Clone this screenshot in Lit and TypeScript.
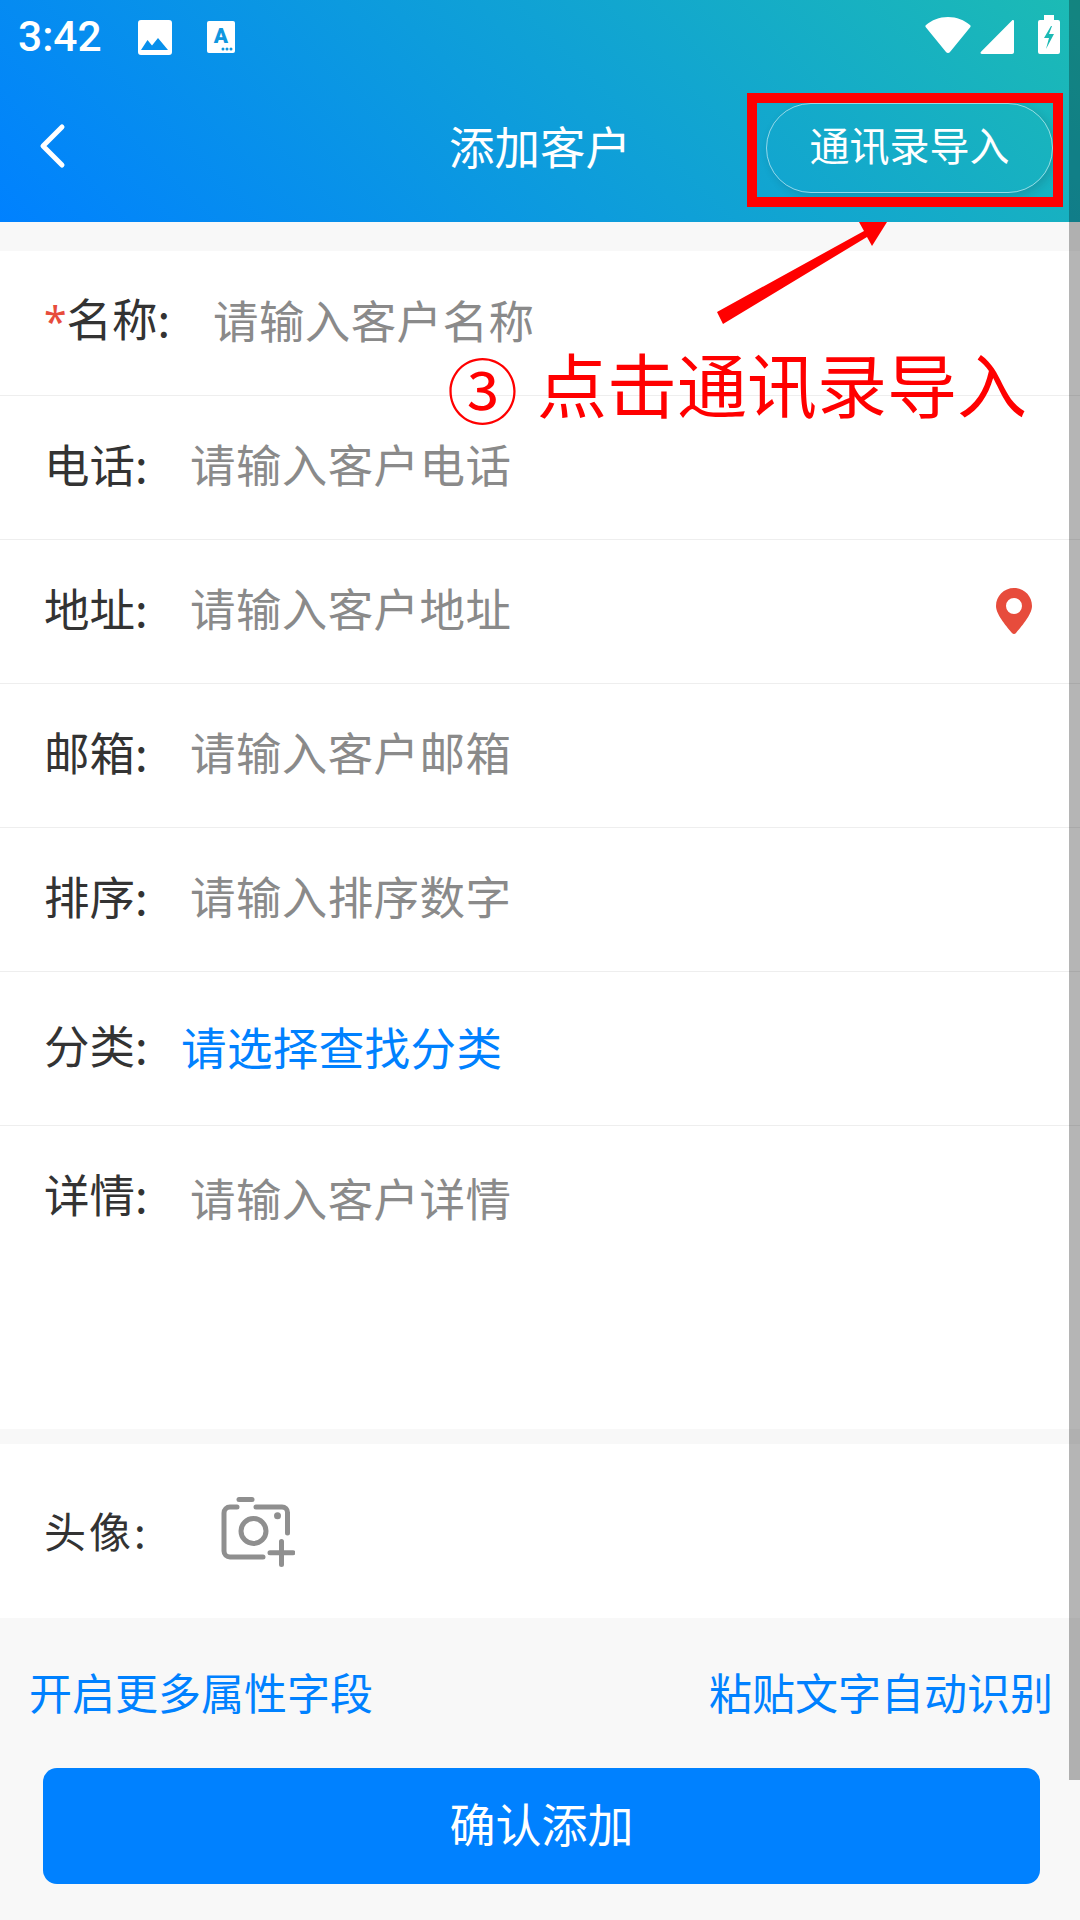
import { LitElement, html, css, svg } from "lit";
import { customElement } from "lit/decorators.js";

const pin = html`<svg class="pin" viewBox="0 0 36 46" width="36" height="46"><path fill="#e74c3c" fill-rule="evenodd" d="M18 0C8 0 0 8 0 18c0 9 12 22 16 27 1 1.300 3 1.300 4 0 4-5 16-18 16-27C36 8 28 0 18 0Zm0 10a8 8 0 1 1 0 16 8 8 0 0 1 0-16Z" /></svg>`;

const camera = html`<svg class="camera" width="74" height="70" viewBox="0 0 74 70" fill="none" stroke="#8f8f8f" stroke-width="5" stroke-linecap="round" stroke-linejoin="round">
  <path d="M18 2.500h13" />
  <path d="M16 10H9a6 6 0 0 0-6 6v38a6 6 0 0 0 6 6h33" />
  <path d="M35 10h26a5.500 5.500 0 0 1 5.500 5.500V36" />
  <circle cx="32.500" cy="34" r="12.500" />
  <circle cx="56.500" cy="18.700" r="3.500" fill="#8f8f8f" stroke="none" />
  <path d="M49 55.700h23M60.500 44.500v23" />
</svg>`;

const chevron = html`<svg class="back" width="32" height="48" viewBox="0 0 32 48" fill="none" stroke="#fff" stroke-width="5" stroke-linecap="round" stroke-linejoin="round"><path d="M23 5 4 24l19 19" /></svg>`;

interface Row { label: string; hint: string; kind?: string; }
const rows: Row[] = [
  { label: "名称:", hint: "请输入客户名称", kind: "req" },
  { label: "电话:", hint: "请输入客户电话" },
  { label: "地址:", hint: "请输入客户地址", kind: "addr" },
  { label: "邮箱:", hint: "请输入客户邮箱" },
  { label: "排序:", hint: "请输入排序数字" },
  { label: "分类:", hint: "请选择查找分类", kind: "pick" },
  { label: "详情:", hint: "请输入客户详情", kind: "area" },
];

@customElement("app-root")
export class AppRoot extends LitElement {
  static styles = css`
    :host {
      display: block;
      position: relative;
      width: 1080px;
      height: 1920px;
      overflow: hidden;
      background: #f8f8f8;
      font-family: "Noto Sans CJK SC", "Noto Sans", sans-serif;
    }
    .head {
      height: 222px;
      background: linear-gradient(45deg, #0081ff, #1cbbb4);
      color: #fff;
      display: flex;
      flex-direction: column;
    }
    .status {
      height: 74px;
      position: relative;
      display: flex;
      align-items: center;
      padding-left: 18px;
    }
    .time {
      font: 500 42.500px/74px Roboto, sans-serif;
      width: 120px;
    }
    .status svg { display: block; flex: none; }
    .spacer { flex: 1; }
    .nav {
      height: 148px;
      display: grid;
      grid-template-columns: 1fr auto 1fr;
      align-items: center;
    }
    .back { margin-left: 39px; margin-bottom: 4px; display: block; }
    .title { font-size: 45.500px; line-height: 60px; padding-bottom: 6px; }
    .pill {
      justify-self: end;
      margin-right: 27px;
      width: 287px;
      height: 90px;
      box-sizing: border-box;
      border: 1px solid rgba(255, 255, 255, 0.55);
      border-radius: 45px;
      box-shadow: 3px 3px 8px rgba(26, 26, 26, 0.15);
      display: flex;
      align-items: center;
      justify-content: center;
      font-size: 40px;
      padding-bottom: 8px;
    }
    .card { background: #fff; margin-top: 29px; }
    .row {
      height: 144px;
      box-sizing: border-box;
      padding-left: 45px;
      padding-right: 48px;
      display: flex;
      align-items: center;
      border-bottom: 1px solid #eee;
      font-size: 45.500px;
    }
    .label { color: #333; width: 146px; flex: none; white-space: nowrap; padding-bottom: 9px; margin-left: -1px; line-height: 54px; }
    .hint { color: #8a8a8a; flex: 1; white-space: nowrap; letter-spacing: 0.4px; padding-bottom: 9px; line-height: 54px; }
    .pin { margin-bottom: 2px; }
    .req { padding-left: 44px; height: 145px; }
    .req .label { width: 169px; margin-left: 0; }
    .star { color: #e74c3c; font-family: "Noto Sans", sans-serif; font-size: 41px; }
    .pick { height: 154px; }
    .pick .label { width: 137px; }
    .pick .hint { color: #0081ff; padding-bottom: 6px; }
    .area {
      height: 303px;
      align-items: flex-start;
      padding-top: 40px;
      border-bottom: none;
    }
    .area .hint { margin-top: 4px; }
    .avatar {
      background: #fff;
      margin-top: 15px;
      height: 174px;
      display: flex;
      align-items: center;
      padding-left: 44px;
    }
    .avatar .alabel {
      color: #333;
      font-size: 42px;
      width: 177px;
      letter-spacing: 3px;
      white-space: nowrap;
      padding-bottom: 4px;
    }
    .camera { display: block; margin-top: 2px; }
    .links {
      display: flex;
      justify-content: space-between;
      padding: 44px 27px 0 29px;
      font-size: 43px;
      line-height: 58px;
      color: #0081ff;
    }
    .submit {
      margin: 48px 40px 0 43px;
      height: 116px;
      border-radius: 14px;
      background: #0081ff;
      color: #fff;
      font-size: 46px;
      display: flex;
      align-items: center;
      justify-content: center;
      box-sizing: border-box;
      padding-bottom: 8px;
    }
    .scrollbar {
      position: absolute;
      left: 1069px;
      top: 0;
      width: 11px;
      height: 1780px;
      background: rgba(0, 0, 0, 0.29);
    }
    .mark {
      position: absolute;
      left: 747px;
      top: 93px;
      width: 316px;
      height: 114px;
      box-sizing: border-box;
      border: 10px solid #f00;
    }
    .arrow { position: absolute; left: 700px; top: 222px; display: block; }
    .note {
      position: absolute;
      left: 442px;
      top: 349px;
      color: #f00;
      font-size: 70px;
      line-height: 60px;
      white-space: nowrap;
      display: flex;
      align-items: center;
    }
    .circled { width: 90px; font-size: 71px; margin-left: 5px; margin-top: 8px; line-height: 60px; }
  `;

  private statusBar() {
    return html`<div class="status">
      <span class="time">3:42</span>
      <svg width="34" height="74" viewBox="0 0 34 74">
        <path fill="#fff" fill-rule="evenodd" d="M3 20h28a3 3 0 0 1 3 3v29a3 3 0 0 1-3 3H3a3 3 0 0 1-3-3V23a3 3 0 0 1 3-3Zm0 30h27l-10-12-6 7.500-4.500-5.500Z" />
      </svg>
      <svg style="margin-left:35px" width="28" height="74" viewBox="0 0 28 74">
        <rect y="21" width="28" height="32" rx="2" fill="#fff" />
        <text x="14" y="43" text-anchor="middle" font-family="Roboto, sans-serif" font-weight="900" font-size="21" fill="#0f97df">A</text>
        <g fill="#0f97df"><circle cx="16" cy="49" r="1.500" /><circle cx="20" cy="49" r="1.500" /><circle cx="24" cy="49" r="1.500" /></g>
      </svg>
      <span class="spacer"></span>
      <svg width="46" height="74" viewBox="0 0 46 74">
        <path fill="#fff" d="M1 25C7 20 14 17 23 17s16 3 22 8c.700.700.800 1.500.200 2.200L25 52a2.600 2.600 0 0 1-4 0L.800 27.200C.200 26.500.300 25.700 1 25Z" />
      </svg>
      <svg style="margin-left:9px" width="34" height="74" viewBox="0 0 34 74">
        <path fill="#fff" d="M32 20.500c1-.800 2-.300 2 1V52c0 1-.800 2-2 2H2c-1.500 0-2-1.300-1-2.300Z" />
      </svg>
      <svg style="margin-left:24px;margin-right:20px" width="22" height="74" viewBox="0 0 22 74">
        <path fill="#fff" d="M6 15h10v5h4a2 2 0 0 1 2 2v30a2 2 0 0 1-2 2H2a2 2 0 0 1-2-2V22a2 2 0 0 1 2-2h4Z" />
        <path fill="#1bb9b4" d="M13 26 6 38h5l-3 11 8-15h-5l3-8Z" />
      </svg>
    </div>`;
  }

  render() {
    return html`
      <header class="head">
        ${this.statusBar()}
        <div class="nav">
          <div>${chevron}</div>
          <div class="title">添加客户</div>
          <div class="pill">通讯录导入</div>
        </div>
      </header>
      <section class="card">
        ${rows.map(
          (r) => html`<div class="row ${r.kind ?? ""}">
            <span class="label">${r.kind === "req" ? html`<span class="star">*</span>` : ""}${r.label}</span>
            <span class="hint">${r.hint}</span>
            ${r.kind === "addr" ? pin : ""}
          </div>`
        )}
      </section>
      <section class="avatar">
        <span class="alabel">头像:</span>
        ${camera}
      </section>
      <div class="links"><span>开启更多属性字段</span><span>粘贴文字自动识别</span></div>
      <div class="submit">确认添加</div>
      <div class="scrollbar"></div>
      <div class="mark"></div>
      <svg class="arrow" width="200" height="110" viewBox="0 0 200 110">
        ${svg`<path fill="#f00" d="M159 0h28l-15 24-5-9L23 102l-6-12L164 9Z" />`}
      </svg>
      <div class="note"><span class="circled">③</span><span>点击通讯录导入</span></div>
    `;
  }
}
